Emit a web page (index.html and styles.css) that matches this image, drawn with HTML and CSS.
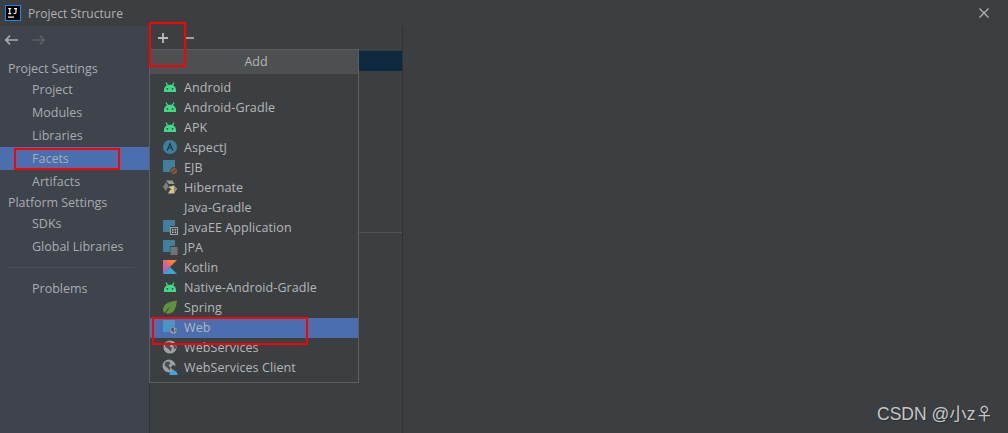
FILE: index.html
```html
<!DOCTYPE html>
<html lang="en">
<head>
<meta charset="utf-8">
<title>Project Structure</title>
<link rel="stylesheet" href="styles.css">
</head>
<body>
<svg class="defs" width="0" height="0" aria-hidden="true">
  <symbol id="android" viewBox="0 0 16 16">
    <path d="M2 13v-2.200C2 7.800 4.600 5.800 8 5.800s6 2 6 5V13z" fill="#3ddc84"/>
    <path d="M4 3.600 5.600 6.400M12 3.600l-1.600 2.800" stroke="#3ddc84" stroke-width="1.200" fill="none"/>
    <circle cx="5.400" cy="9.800" r=".9" fill="#3c3f41"/><circle cx="10.600" cy="9.800" r=".9" fill="#3c3f41"/>
  </symbol>
  <symbol id="globe" viewBox="0 0 16 16">
    <circle cx="8" cy="8" r="6.600" fill="#9aa0a4"/>
    <path d="M4 3.500 8 3l1.500 2-2 2.200L9.800 9l-1 3.600L6.600 10 3 7.500zM11 5.500l2.600.8.4 3-1.800.8z" fill="#4b4f52"/>
  </symbol>
</svg>

<header class="titlebar">
  <svg class="ij-logo" width="16" height="16" viewBox="0 0 16 16"><rect width="16" height="16" fill="#1e88e5"/><rect x="1" y="1" width="14" height="14" fill="#000"/><rect x="3" y="11.500" width="6" height="1.200" fill="#fff"/><path d="M3.200 3.600h3M4.700 3.600v5M3.200 8.600h3M9 3.600h3M11 3.600v4c0 1-1.600 1.200-2.400.6" stroke="#fff" stroke-width="1.100" fill="none"/></svg>
  <span class="title-text">Project Structure</span>
  <svg class="close" width="12" height="12" viewBox="0 0 12 12"><path d="M1.500 1.500l9 9M10.500 1.500l-9 9" stroke="#b4b6b8" stroke-width="1.200"/></svg>
</header>

<div class="workspace">
  <nav class="sidebar">
    <div class="history">
      <svg width="16" height="16" viewBox="0 0 16 16"><path d="M14 8H1.800M6 3.700 1.800 8 6 12.300" stroke="#a9abad" stroke-width="1.700" fill="none"/></svg>
      <svg width="16" height="16" viewBox="0 0 16 16"><path d="M1.500 8h11.700M9 3.700 13.200 8 9 12.300" stroke="#5d6064" stroke-width="1.700" fill="none"/></svg>
    </div>
    <div class="group">Project Settings</div>
    <a class="item">Project</a>
    <a class="item">Modules</a>
    <a class="item">Libraries</a>
    <a class="item selected">Facets</a>
    <a class="item">Artifacts</a>
    <div class="group">Platform Settings</div>
    <a class="item">SDKs</a>
    <a class="item">Global Libraries</a>
    <div class="separator"></div>
    <a class="item">Problems</a>
  </nav>

  <section class="middle">
    <div class="toolbar">
      <svg width="12" height="12" viewBox="0 0 12 12"><path d="M6 1v10M1 6h10" stroke="#b9bbbd" stroke-width="1.800"/></svg>
      <svg width="10" height="12" viewBox="0 0 10 12"><path d="M1 6h8" stroke="#a9abad" stroke-width="1.800"/></svg>
    </div>
    <div class="selected-row"></div>
    <div class="upper-fill"></div>
    <div class="lower-fill"></div>
  </section>

  <section class="detail"></section>
</div>

<div class="popup">
  <div class="popup-title">Add</div>
  <ul class="popup-list">
    <li><svg width="16" height="16"><use href="#android"/></svg>Android</li>
    <li><svg width="16" height="16"><use href="#android"/></svg>Android-Gradle</li>
    <li><svg width="16" height="16"><use href="#android"/></svg>APK</li>
    <li><svg width="16" height="16" viewBox="0 0 16 16"><circle cx="8" cy="8" r="7" fill="#3d7f9f"/><path d="M5.200 11.500 8 4.500l2.800 7M6.300 9h3.400" stroke="#23323c" stroke-width="1.200" fill="none"/></svg>AspectJ</li>
    <li><svg width="16" height="16" viewBox="0 0 16 16"><rect x="1" y="1" width="12" height="12" fill="#40809f"/><circle cx="12" cy="12" r="3.800" fill="#3c3f41"/><circle cx="12" cy="12" r="3" fill="#8d5a34"/><path d="M10.200 13.500 13.800 10.500" stroke="#4a2f1c"/></svg>EJB</li>
    <li><svg width="16" height="16" viewBox="0 0 16 16"><path d="M4 1.500h6.500l2 3.500H7z" fill="#9b9b8e"/><path d="M1 8l3-5 2.500 4-2.500 5z" fill="#7d8083"/><path d="M6 8l5.500-1.500L15 9.500l-3 5H6l2.500-4H10z" fill="#d4c48f"/><path d="M12 6l3 3.500-3 5" fill="#8a8a7c"/></svg>Hibernate</li>
    <li class="no-icon">Java-Gradle</li>
    <li><svg width="16" height="16" viewBox="0 0 16 16"><path d="M1 1h12v6H8v6H1z" fill="#40809f"/><rect x="8.500" y="8.500" width="7" height="7" fill="none" stroke="#a0a3a5"/><path d="M10 10.500h1.500M10 12h1.500M10 13.500h1.500M12.700 10.500h1.500M12.700 12h1.500M12.700 13.500h1.500" stroke="#c0c2c4"/></svg>JavaEE Application</li>
    <li><svg width="16" height="16" viewBox="0 0 16 16"><path d="M1 1h12v6H8v6H1z" fill="#40809f"/><path d="M8.500 9h7M8.500 11h7M8.500 13h7M8.500 15h7" stroke="#a8abad"/></svg>JPA</li>
    <li><svg width="16" height="16" viewBox="0 0 16 16"><defs><linearGradient id="kt" x1="0" y1="1" x2="1" y2="0"><stop offset="0" stop-color="#8f6ce0"/><stop offset=".45" stop-color="#e0608a"/><stop offset=".8" stop-color="#f6881f"/></linearGradient></defs><path d="M1 1h14L1 15z" fill="url(#kt)"/><path d="M1 15 8 8l7 7z" fill="#3aa3e0"/></svg>Kotlin</li>
    <li><svg width="16" height="16"><use href="#android"/></svg>Native-Android-Gradle</li>
    <li><svg width="16" height="16" viewBox="0 0 16 16"><path d="M15 1.500C9 2.500 2 3.500 1 10c0 2 1 3.500 2 4 1.500-3.500 3.500-5 6-6.500-2 2-4 4-5 7 5 1 10-1 11-13.500z" fill="#5f9339"/></svg>Spring</li>
    <li class="active"><svg width="16" height="16" viewBox="0 0 16 16"><path d="M1 1h12v6.500A5 5 0 0 0 7.500 13H1z" fill="#4a94c8"/><use href="#globe" x="7.500" y="7.500" width="8" height="8"/></svg>Web</li>
    <li><svg width="16" height="16"><use href="#globe"/></svg>WebServices</li>
    <li><svg width="16" height="16" viewBox="0 0 16 16"><circle cx="7" cy="7" r="6.500" fill="#9aa0a4"/><path d="M3.500 3 7 2.500l1.500 2-2 2 2 2-1 3-2-2.500L2.500 6.500z" fill="#4b4f52"/><circle cx="11.500" cy="8.500" r="2.300" fill="#3c3f41"/><path d="M7.500 16c0-3 1.700-4.500 4-4.500s4 1.500 4 4.500z" fill="#3da5e0"/></svg>WebServices Client</li>
  </ul>
</div>

<div class="mark mark-plus"></div>
<div class="mark mark-facets"></div>
<div class="mark mark-web"></div>
<div class="watermark">CSDN @小z<span class="female">♀</span></div>
</body>
</html>
```
FILE: styles.css
```css
* { box-sizing: border-box; }
html, body { height: 100%; }
body {
  margin: 0;
  height: 433px;
  overflow: hidden;
  background: #3c3f41;
  color: #bbbbbb;
  font-family: "Open Sans", "Noto Sans", sans-serif;
  font-size: 12.5px;
  display: flex;
  flex-direction: column;
  position: relative;
}
.defs { position: absolute; }

.titlebar {
  height: 26px;
  flex: none;
  display: flex;
  align-items: center;
  padding: 0 0 0 5px;
  background: #3c3f41;
}
.ij-logo { flex: none; }
.title-text { margin-left: 7px; color: #b0b2b4; font-size: 12px; letter-spacing: .03px; }
.close { margin-left: auto; margin-right: 18px; }

.workspace { flex: 1; display: flex; min-height: 0; }

.sidebar {
  width: 150px;
  flex: none;
  background: #3e434c;
  border-right: 1px solid #323232;
  color: #a9acb0;
}
.history {
  height: 33px;
  display: flex;
  align-items: center;
  gap: 11px;
  padding: 0 0 5px 4px;
}
.group {
  height: 19px;
  line-height: 19px;
  padding-left: 8px;
  letter-spacing: -.05px;
}
.item {
  display: block;
  height: 23px;
  line-height: 23px;
  padding-left: 32px;
}
.selected { background: #4b6eaf; }
.separator {
  height: 1px;
  margin: 9px 14px 9px 8px;
  background: #4a4e55;
}

.middle {
  width: 253px;
  flex: none;
  display: flex;
  flex-direction: column;
  border-right: 1px solid #323232;
}
.toolbar {
  height: 24px;
  display: flex;
  align-items: center;
  gap: 16px;
  padding-left: 7px;
  flex: none;
}
.selected-row {
  height: 20px;
  margin-top: 1px;
  background: #0d293e;
  flex: none;
}
.upper-fill { height: 162px; flex: none; border-bottom: 1px solid #515151; }
.lower-fill { flex: 1; }
.detail { flex: 1; }

.popup {
  position: absolute;
  left: 149px;
  top: 49px;
  width: 210px;
  height: 334px;
  background: #3c3f41;
  border: 1px solid #5e6060;
}
.popup-title {
  height: 24px;
  line-height: 23px;
  padding-left: 4px;
  text-align: center;
  background: #4c5052;
  color: #b4b6b8;
}
.popup-list { list-style: none; margin: 0; padding: 4px 0 0; letter-spacing: .1px; }
.popup-list li {
  height: 20px;
  display: flex;
  align-items: center;
  gap: 6px;
  padding: 0 0 2px 12px;
  white-space: nowrap;
  color: #b4b7ba;
}
.popup-list .no-icon { padding-left: 34px; }
.popup-list .active { background: #4b6eaf; }

.mark { position: absolute; border: 2px solid #ff0000; }
.mark-plus { left: 149px; top: 22px; width: 37px; height: 45px; }
.mark-facets { left: 14px; top: 148px; width: 106px; height: 22px; }
.mark-web { left: 152px; top: 317px; width: 156px; height: 28px; }

.watermark {
  position: absolute;
  left: 877px;
  top: 402px;
  font-family: "Liberation Sans", "Noto Sans CJK SC", sans-serif;
  font-size: 17.5px;
  line-height: 24px;
  color: #c4c6c8;
  text-shadow: 1px 1px 1px #2a2c2d;
  white-space: nowrap;
}
.female { font-family: "Noto Sans CJK SC", "DejaVu Sans", sans-serif; font-size: 17.5px; line-height: 1; }
```
